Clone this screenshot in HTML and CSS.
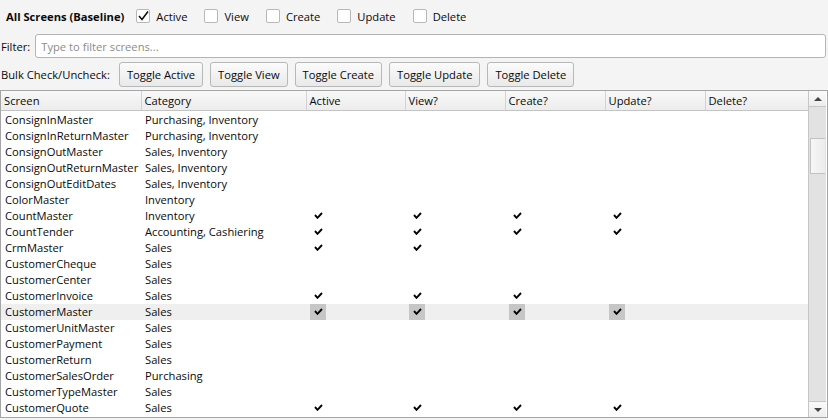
FILE: index.html
```html
<!DOCTYPE html>
<html lang="en">

<head>
    <meta charset="UTF-8">
    <meta name="viewport" content="width=device-width, initial-scale=1.0">
    <title>Screen Permissions</title>
    <link rel="stylesheet" href="styles.css">
</head>

<body>

    <div class="baseline-row">
        <span class="baseline-title">All Screens (Baseline)</span>
        <label class="check"><span class="box checked"><svg viewBox="0 0 11 10" width="11" height="10"><path d="M1 5 L4 8.5 L10 0.5" fill="none" stroke="#111" stroke-width="1.6"/></svg></span>Active</label>
        <label class="check"><span class="box"></span>View</label>
        <label class="check"><span class="box"></span>Create</label>
        <label class="check"><span class="box"></span>Update</label>
        <label class="check"><span class="box"></span>Delete</label>
    </div>

    <div class="filter-row">
        <label for="filter">Filter:</label>
        <input type="text" id="filter" placeholder="Type to filter screens...">
    </div>

    <div class="bulk-row">
        <span>Bulk Check/Uncheck:</span>
        <button>Toggle Active</button>
        <button>Toggle View</button>
        <button>Toggle Create</button>
        <button>Toggle Update</button>
        <button>Toggle Delete</button>
    </div>

    <div class="grid">
        <div class="grid-body">
            <table>
                <colgroup>
                    <col style="width:140px">
                    <col style="width:165px">
                    <col style="width:99px">
                    <col style="width:100px">
                    <col style="width:100px">
                    <col style="width:100px">
                    <col style="width:103px">
                </colgroup>
                <thead>
                    <tr>
                        <th>Screen</th>
                        <th>Category</th>
                        <th>Active</th>
                        <th>View?</th>
                        <th>Create?</th>
                        <th>Update?</th>
                        <th>Delete?</th>
                    </tr>
                </thead>
                <tbody id="screen-rows"></tbody>
            </table>
        </div>
        <div class="vscroll">
            <div class="arrow up"></div>
            <div class="track">
                <div class="thumb"></div>
            </div>
            <div class="arrow down"></div>
        </div>
    </div>

    <script>
        // name, category, [active, view, create, update, delete]
        const screens = [
            ['ConsignInMaster', 'Purchasing, Inventory', '00000'],
            ['ConsignInReturnMaster', 'Purchasing, Inventory', '00000'],
            ['ConsignOutMaster', 'Sales, Inventory', '00000'],
            ['ConsignOutReturnMaster', 'Sales, Inventory', '00000'],
            ['ConsignOutEditDates', 'Sales, Inventory', '00000'],
            ['ColorMaster', 'Inventory', '00000'],
            ['CountMaster', 'Inventory', '11110'],
            ['CountTender', 'Accounting, Cashiering', '11110'],
            ['CrmMaster', 'Sales', '11000'],
            ['CustomerCheque', 'Sales', '00000'],
            ['CustomerCenter', 'Sales', '00000'],
            ['CustomerInvoice', 'Sales', '11100'],
            ['CustomerMaster', 'Sales', '11110'],
            ['CustomerUnitMaster', 'Sales', '00000'],
            ['CustomerPayment', 'Sales', '00000'],
            ['CustomerReturn', 'Sales', '00000'],
            ['CustomerSalesOrder', 'Purchasing', '00000'],
            ['CustomerTypeMaster', 'Sales', '00000'],
            ['CustomerQuote', 'Sales', '11110']
        ];
        const selected = 'CustomerMaster';

        const tick = '<span class="tick"><svg viewBox="0 0 9 7" width="9" height="7"><path d="M1 3 L3.5 5.8 L8 1" fill="none" stroke="#000" stroke-width="1.9"/></svg></span>';

        const body = document.getElementById('screen-rows');
        screens.forEach(([name, category, flags]) => {
            const row = document.createElement('tr');
            if (name === selected) row.className = 'selected';
            let html = `<td>${name}</td><td>${category}</td>`;
            for (const f of flags) {
                html += `<td class="flag">${f === '1' ? tick : ''}</td>`;
            }
            row.innerHTML = html;
            body.appendChild(row);
        });
    </script>

</body>

</html>
```

FILE: styles.css
```css
body {
    font-family: "Open Sans", "Noto Sans", sans-serif;
    font-size: 11.2px;
    color: #0a0a0a;
    margin: 0;
    padding: 0;
    background-color: #f4f4f4;
    width: 828px;
    height: 420px;
    overflow: hidden;
}

.baseline-row {
    display: flex;
    align-items: center;
    height: 24px;
    margin-top: 4px;
    padding-left: 6px;
}

.baseline-title {
    font-weight: bold;
    margin-right: 12px;
}

.check {
    display: flex;
    align-items: center;
    margin-right: 17px;
}

.box {
    width: 12px;
    height: 12px;
    border: 1px solid #b8b8b8;
    border-radius: 2px;
    background-color: #fff;
    margin-right: 6px;
    display: flex;
    align-items: center;
    justify-content: center;
}

.filter-row {
    display: flex;
    align-items: center;
    height: 24px;
    margin-top: 6px;
    padding-left: 1px;
    padding-right: 2px;
}

.filter-row label {
    margin-right: 5px;
}

.filter-row input {
    flex: 1;
    height: 24px;
    box-sizing: border-box;
    border: 1px solid #b4b4b4;
    border-radius: 3px;
    padding: 0 5px;
    font-family: inherit;
    font-size: 11.2px;
    background-color: #fff;
}

.filter-row input::placeholder {
    color: #8c8c8c;
}

.bulk-row {
    display: flex;
    align-items: center;
    gap: 7px;
    height: 25px;
    margin-top: 4px;
    padding-left: 1px;
}

.bulk-row span {
    margin-right: 2px;
}

button {
    height: 25px;
    padding: 0 7px;
    font-family: inherit;
    font-size: 11.2px;
    color: #0a0a0a;
    border: 1px solid #b8b8b8;
    border-radius: 3px;
    background: linear-gradient(#fbfbfb, #e9e9e9);
}

.grid {
    display: flex;
    margin-top: 3px;
    width: 826px;
    height: 326px;
    border: 1px solid #a5a5a5;
    background-color: #fff;
}

.grid-body {
    width: 807px;
    overflow: hidden;
}

table {
    width: 807px;
    table-layout: fixed;
    border-collapse: collapse;
}

th {
    height: 19px;
    padding: 0 3px;
    text-align: left;
    font-weight: normal;
    background: linear-gradient(#f8f8f8, #ececec);
    border-right: 1px solid #d2d2d2;
    border-bottom: 1px solid #c4c4c4;
    box-sizing: border-box;
}

td {
    height: 16px;
    padding: 0 4px;
    line-height: 16px;
    white-space: nowrap;
    overflow: hidden;
}

tbody tr:first-child td {
    padding-top: 1px;
}

tr.selected td {
    background-color: #efefef;
}

.tick {
    display: inline-flex;
    width: 16px;
    height: 16px;
    align-items: center;
    justify-content: center;
    vertical-align: top;
}

tr.selected .tick {
    background-color: #c6c6c6;
}

.vscroll {
    width: 17px;
    display: flex;
    flex-direction: column;
    border-left: 1px solid #c6c6c6;
    background-color: #e6e6e6;
}

.arrow {
    height: 15px;
    background: linear-gradient(#fafafa, #ececec);
    display: flex;
    align-items: center;
    justify-content: center;
}

.arrow::after {
    content: "";
    border-left: 4px solid transparent;
    border-right: 4px solid transparent;
}

.arrow.up::after {
    border-bottom: 4px solid #444;
}

.arrow.down::after {
    border-top: 4px solid #444;
}

.arrow.up {
    border-bottom: 1px solid #c6c6c6;
}

.arrow.down {
    border-top: 1px solid #c6c6c6;
}

.track {
    flex: 1;
    padding-top: 31px;
    background-color: #e2e2e2;
}

.thumb {
    height: 34px;
    margin: 0 1px;
    border: 1px solid #c2c2c2;
    border-right: none;
    background: linear-gradient(to right, #f6f6f6, #ececec);
}
```
